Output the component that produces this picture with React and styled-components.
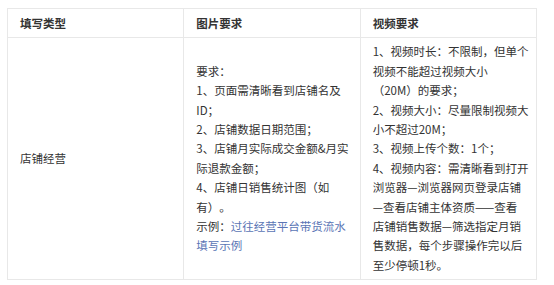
import React from "react";
import styled, { createGlobalStyle } from "styled-components";

const Global = createGlobalStyle`
  html, body {
    margin: 0;
    padding: 0;
    background: #ffffff;
  }
  body {
    font-family: "Noto Sans CJK SC", "Noto Sans", sans-serif;
    color: #333333;
  }
`;

const Page = styled.div`
  padding: 8px 0 0 7px;
`;

const Table = styled.table`
  width: 530px;
  table-layout: fixed;
  border-collapse: collapse;
  font-size: 11.5px;
  line-height: 19.4px;
  text-spacing-trim: space-all;
`;

const HeadCell = styled.th`
  border: 1px solid #e8e8e8;
  padding: 5px 6px 4px 12px;
  text-align: left;
  font-weight: 700;
  color: #333333;
  vertical-align: middle;
`;

const Cell = styled.td`
  border: 1px solid #e8e8e8;
  padding: 4px 6px 4px 12px;
  vertical-align: middle;
  color: #333333;
`;

const Line = styled.div`
  white-space: nowrap;
`;

const Link = styled.span`
  color: #5a75b5;
`;

const imageLines = [
  ["要求："],
  ["1、页面需清晰看到店铺名及"],
  ["ID；"],
  ["2、店铺数据日期范围；"],
  ["3、店铺月实际成交金额&月实"],
  ["际退款金额；"],
  ["4、店铺日销售统计图（如"],
  ["有）。"],
  ["示例：", { link: "过往经营平台带货流水" }],
  [{ link: "填写示例" }],
];

const videoLines = [
  "1、视频时长：不限制，但单个",
  "视频不能超过视频大小",
  "（20M）的要求；",
  "2、视频大小：尽量限制视频大",
  "小不超过20M；",
  "3、视频上传个数：1个；",
  "4、视频内容：需清晰看到打开",
  "浏览器—浏览器网页登录店铺",
  "—查看店铺主体资质——查看",
  "店铺销售数据—筛选指定月销",
  "售数据，每个步骤操作完以后",
  "至少停顿1秒。",
];

export default function App() {
  return (
    <>
      <Global />
      <Page>
        <Table>
          <thead>
            <tr>
              <HeadCell>填写类型</HeadCell>
              <HeadCell>图片要求</HeadCell>
              <HeadCell>视频要求</HeadCell>
            </tr>
          </thead>
          <tbody>
            <tr>
              <Cell>店铺经营</Cell>
              <Cell>
                {imageLines.map((parts, i) => (
                  <Line key={i}>
                    {parts.map((p, j) =>
                      typeof p === "string" ? (
                        <React.Fragment key={j}>{p}</React.Fragment>
                      ) : (
                        <Link key={j}>{p.link}</Link>
                      )
                    )}
                  </Line>
                ))}
              </Cell>
              <Cell>
                {videoLines.map((t, i) => (
                  <Line key={i}>{t}</Line>
                ))}
              </Cell>
            </tr>
          </tbody>
        </Table>
      </Page>
    </>
  );
}
